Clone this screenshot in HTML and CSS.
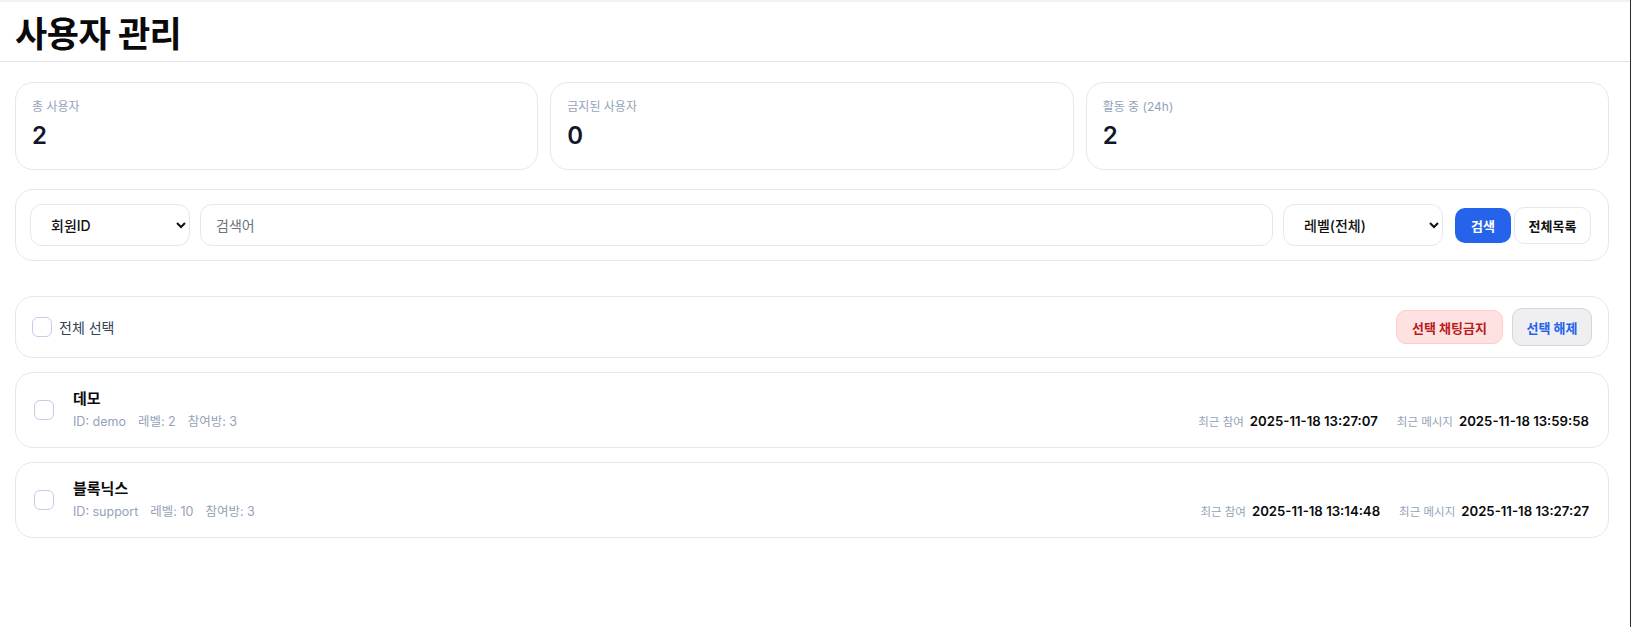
FILE: index.html
```html
<!DOCTYPE html>
<html lang="ko">
<head>
    <meta charset="utf-8">
    <title>사용자 관리</title>
    <link rel="stylesheet" href="styles.css">
</head>
<body>
    <header class="page-header">
        <h1>사용자 관리</h1>
    </header>

    <main class="content">
        <section class="stats">
            <div class="stat-card">
                <div class="stat-label">총 사용자</div>
                <div class="stat-value">2</div>
            </div>
            <div class="stat-card">
                <div class="stat-label">금지된 사용자</div>
                <div class="stat-value">0</div>
            </div>
            <div class="stat-card">
                <div class="stat-label">활동 중 (24h)</div>
                <div class="stat-value">2</div>
            </div>
        </section>

        <form class="search-card" onsubmit="return false">
            <select class="field field-type">
                <option>회원ID</option>
                <option>닉네임</option>
            </select>
            <input class="field field-keyword" type="text" placeholder="검색어">
            <select class="field field-level">
                <option>레벨(전체)</option>
            </select>
            <button class="btn btn-primary" type="submit">검색</button>
            <button class="btn btn-outline" type="button">전체목록</button>
        </form>

        <div class="bulk-bar">
            <label class="check-all">
                <input type="checkbox" class="check">
                <span>전체 선택</span>
            </label>
            <div class="bulk-actions">
                <button class="btn btn-danger" type="button">선택 채팅금지</button>
                <button class="btn btn-gray" type="button">선택 해제</button>
            </div>
        </div>

        <div class="user-list">
            <div class="user-row">
                <input type="checkbox" class="check">
                <div class="user-info">
                    <div class="user-name">데모</div>
                    <div class="user-meta">
                        <span>ID: demo</span>
                        <span>레벨: 2</span>
                        <span>참여방: 3</span>
                    </div>
                </div>
                <div class="user-times">
                    <span class="time-label">최근 참여</span>
                    <span class="time-value">2025-11-18 13:27:07</span>
                    <span class="time-label">최근 메시지</span>
                    <span class="time-value">2025-11-18 13:59:58</span>
                </div>
            </div>

            <div class="user-row">
                <input type="checkbox" class="check">
                <div class="user-info">
                    <div class="user-name">블록닉스</div>
                    <div class="user-meta">
                        <span>ID: support</span>
                        <span>레벨: 10</span>
                        <span>참여방: 3</span>
                    </div>
                </div>
                <div class="user-times">
                    <span class="time-label">최근 참여</span>
                    <span class="time-value">2025-11-18 13:14:48</span>
                    <span class="time-label">최근 메시지</span>
                    <span class="time-value">2025-11-18 13:27:27</span>
                </div>
            </div>
        </div>
    </main>
</body>
</html>
```

FILE: styles.css
```css
html {
    min-height: 100%;
    border-right: 1px solid #2b2b2b;
}
body {
    margin: 0;
    font-family: Inter, "Noto Sans CJK KR", sans-serif;
    background: #ffffff;
    color: #0f172a;
}
.page-header {
    border-top: 2px solid #eef2f7;
    border-bottom: 1px solid #e2e4e8;
    height: 59px;
    padding: 0 15px;
    display: flex;
    align-items: center;
}
h1 {
    margin: 0;
    font-size: 35px;
    font-weight: 700;
    color: #0a0a0a;
    letter-spacing: -0.5px;
}
.content {
    padding: 20px 21px 40px 15px;
}
.stats {
    display: grid;
    grid-template-columns: repeat(3, 1fr);
    gap: 12px;
}
.stat-card {
    border: 1px solid #e5e7eb;
    border-radius: 18px;
    padding: 16px 16px;
    height: 88px;
    box-sizing: border-box;
}
.stat-label {
    font-size: 12px;
    line-height: 16px;
    color: #94a3b8;
    margin-bottom: 5px;
}
.stat-value {
    font-size: 24px;
    line-height: 32px;
    font-weight: 600;
    color: #0f172a;
}
.search-card {
    margin: 19px 0 0;
    border: 1px solid #e5e7eb;
    border-radius: 18px;
    padding: 14px 17px 14px 14px;
    display: flex;
    align-items: center;
}
.field {
    height: 42px;
    box-sizing: border-box;
    border: 1px solid #e2e8f0;
    border-radius: 12px;
    background: #fff;
    font-family: inherit;
    font-size: 14px;
    color: #111;
}
.field-type {
    width: 160px;
    padding: 0 10px 0 16px;
    font-weight: 500;
}
.field-keyword {
    flex: 1;
    margin: 0 10px;
    padding: 0 15px;
}
.field-keyword::placeholder {
    color: #6b7280;
}
.field-level {
    width: 160px;
    padding: 0 10px 0 16px;
    font-weight: 500;
}
.btn {
    font-family: inherit;
    font-size: 13px;
    font-weight: 700;
    border-radius: 10px;
    cursor: pointer;
    box-sizing: border-box;
}
.btn-primary {
    margin-left: 12px;
    width: 56px;
    height: 35px;
    background: #2563eb;
    border: none;
    color: #fff;
}
.btn-outline {
    margin-left: 3px;
    width: 77px;
    height: 37px;
    background: #fff;
    border: 1px solid #e2e8f0;
    color: #111;
}
.bulk-bar {
    margin-top: 35px;
    height: 62px;
    box-sizing: border-box;
    border: 1px solid #e5e7eb;
    border-radius: 18px;
    padding: 0 16px;
    display: flex;
    align-items: center;
    justify-content: space-between;
}
.check-all {
    display: flex;
    align-items: center;
    gap: 7px;
    font-size: 14px;
    color: #334155;
}
.check {
    appearance: none;
    width: 20px;
    height: 20px;
    margin: 0;
    border: 1px solid #c5cae6;
    border-radius: 6px;
    background: #fff;
}
.bulk-actions {
    display: flex;
    align-items: center;
    gap: 9px;
}
.btn-danger {
    width: 107px;
    height: 34px;
    background: #fee2e2;
    border: 1px solid #fecaca;
    color: #b91c1c;
}
.btn-gray {
    width: 80px;
    height: 38px;
    background: #efeff1;
    border: 1px solid #d4d6dc;
    color: #2563eb;
}
.user-list {
    margin-top: 14px;
    display: flex;
    flex-direction: column;
    gap: 14px;
}
.user-row {
    border: 1px solid #e5e7eb;
    border-radius: 18px;
    padding: 16px 19px 16px 18px;
    display: flex;
    align-items: center;
}
.user-info {
    flex: 1;
    margin-left: 19px;
}
.user-name {
    font-size: 15px;
    line-height: 20px;
    font-weight: 700;
    color: #0a0a0a;
}
.user-meta {
    margin-top: 4px;
    font-size: 12.5px;
    line-height: 18px;
    color: #94a3b8;
    display: flex;
    gap: 12px;
}
.user-times {
    align-self: flex-end;
    display: flex;
    align-items: baseline;
    line-height: 18px;
}
.time-label {
    font-size: 11.5px;
    color: #94a3b8;
    margin-right: 6px;
}
.time-value {
    font-size: 13.2px;
    font-weight: 600;
    color: #0a0a0a;
    margin-right: 19px;
}
.time-value:last-child {
    margin-right: 0;
}
```
